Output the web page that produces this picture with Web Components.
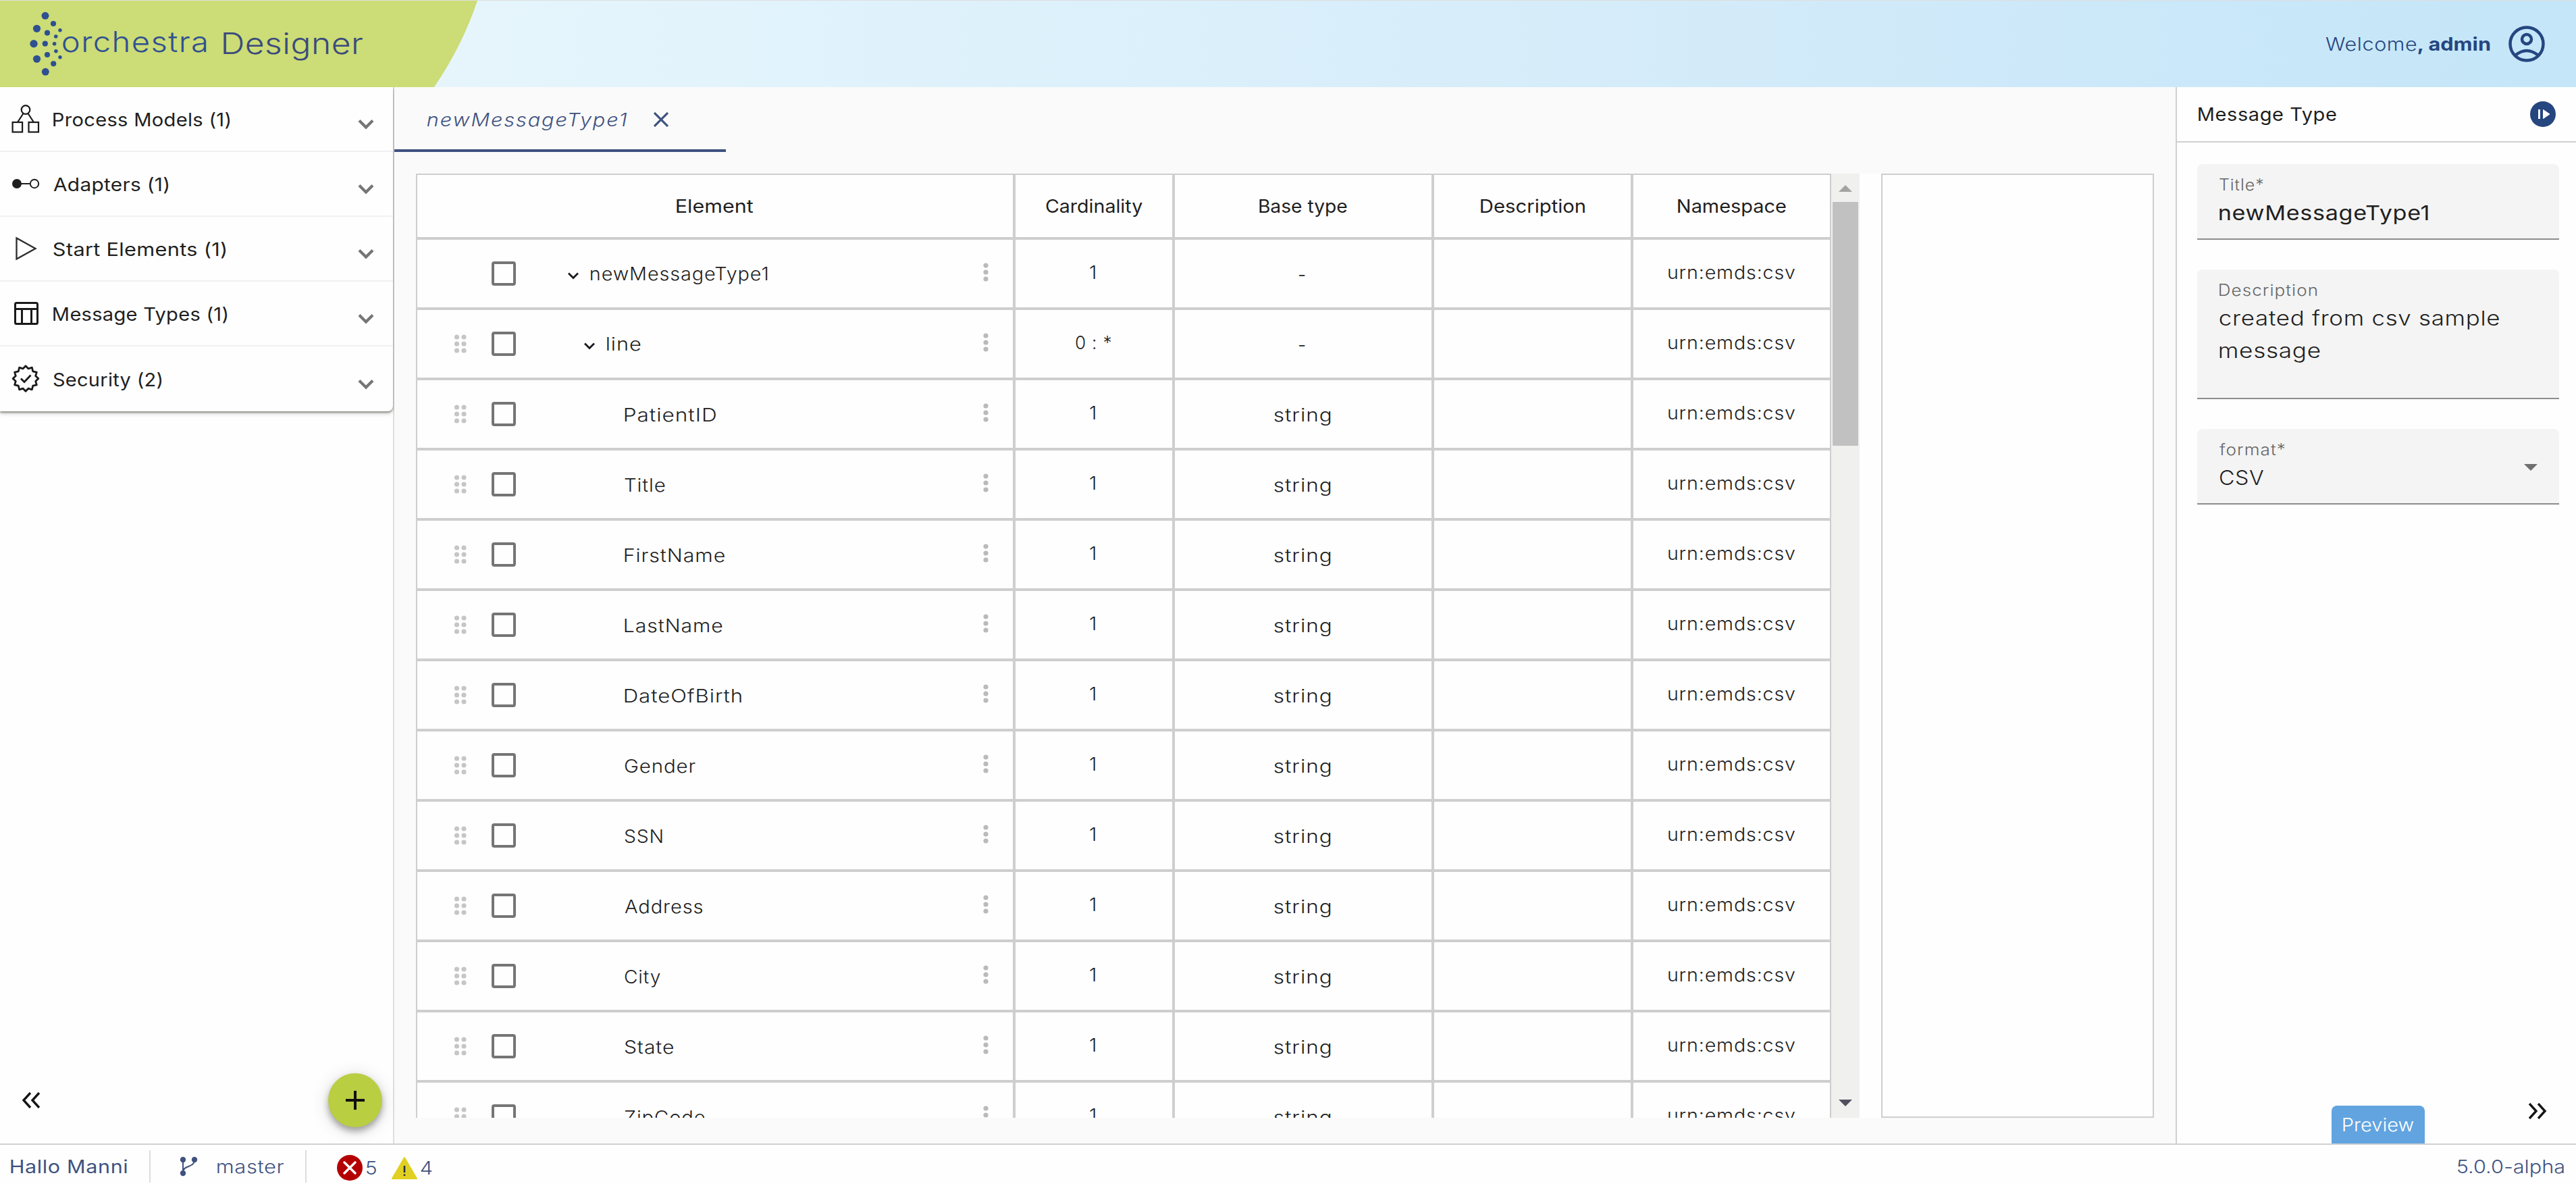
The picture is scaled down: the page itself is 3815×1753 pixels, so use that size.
<!DOCTYPE html>
<html lang="en">
<head>
<meta charset="utf-8">
<title>orchestra Designer</title>
<style>
  html, body { margin: 0; padding: 0; }
  body { width: 3815px; height: 1753px; overflow: hidden; font-family: Inter, "Open Sans", sans-serif; font-weight: 350; color: #1f1f1f; background: #fefefe; }
</style>
</head>
<body>
<designer-app></designer-app>
<script>
const define = (name, html, setup) => customElements.define(name, class extends HTMLElement {
  connectedCallback() {
    if (this.shadowRoot) return;
    const root = this.attachShadow({ mode: 'open' });
    root.innerHTML = typeof html === 'function' ? html(this) : html;
    if (setup) setup(this, root);
  }
});

/* A label whose box is exactly its cap height and its ink width (attribute w). */
const pen = document.createElement('canvas').getContext('2d');
define('fit-text', `<style>
  :host { display: block; flex: none; white-space: pre; line-height: .7275; font-size: 27px; letter-spacing: .02em; text-align: left; }
  span { display: inline-block; vertical-align: top; transform-origin: 0 0; }
</style><span><slot></slot></span>`, (host, root) => {
  const w = +host.getAttribute('w');
  if (host.hasAttribute('fs')) host.style.fontSize = host.getAttribute('fs') + 'px';
  host.style.width = w + 'px';
  host.style.height = '.7275em';
  const cs = getComputedStyle(host);
  pen.font = `${cs.fontStyle} ${cs.fontWeight} ${cs.fontSize} ${cs.fontFamily}`;
  pen.letterSpacing = cs.letterSpacing;
  const text = host.textContent;
  const m = pen.measureText(text);
  const last = text.length ? parseFloat(cs.letterSpacing) || 0 : 0;
  pen.letterSpacing = '0px';
  const plain = pen.measureText(text);
  const ink = plain.actualBoundingBoxLeft + plain.actualBoundingBoxRight + (m.width - plain.width) - last;
  const k = w / ink;
  root.querySelector('span').style.transform = `translate(${plain.actualBoundingBoxLeft * k}px, 1px) scaleX(${k})`;
});

const icons = {
  process: `<svg width="42" height="42" viewBox="0 0 42 42" fill="none" stroke="#1a1a1a" stroke-width="2.2"><circle cx="21" cy="7.5" r="6.3"/><path d="M17.5 13L9 26M24.500 13L33 26"/><rect x="1.600" y="26" width="14.500" height="14.500"/><rect x="25.500" y="26" width="14.500" height="14.500"/></svg>`,
  adapter: `<svg width="42" height="42" viewBox="0 0 42 42" fill="none" stroke="#1f1f1f" stroke-width="2"><circle cx="8" cy="21" r="7" fill="#1f1f1f" stroke="none"/><path d="M14 21H27"/><circle cx="34" cy="21" r="6.200"/></svg>`,
  start: `<svg width="42" height="42" viewBox="0 0 42 42" fill="none" stroke="#2b2b2b" stroke-width="2.300"><path d="M7.500 5.500V36.500L35.500 21Z"/></svg>`,
  message: `<svg width="42" height="42" viewBox="0 0 42 42" fill="none" stroke="#1a1a1a" stroke-width="3"><rect x="5.500" y="5.500" width="33" height="31" rx="2"/><path d="M5.500 14.500H38.500M15.500 14.500V36.500M29.500 14.500V36.500"/></svg>`,
  security: `<svg width="42" height="42" viewBox="0 0 42 42" fill="none" stroke="#1a1a1a" stroke-width="2.800"><path stroke-linejoin="round" d="${(() => {
    let d = '';
    for (let i = 0; i < 24; i++) {
      const a = (i + 1) * Math.PI / 12, r = i % 2 ? 18.800 : 15.200;
      d += (i ? 'L' : 'M') + (21 + r * Math.cos(a)).toFixed(1) + ' ' + (20.500 + r * Math.sin(a)).toFixed(1);
    }
    return d + 'Z';
  })()}"/><path d="M14 20.500L19 25.500L28.500 15.500"/></svg>`
};

define('brand-logo', `<style>
  :host { display: flex; align-items: flex-start; width: 710px; height: 128px; background: #ccdc76; clip-path: path('M0 0H707Q685 66 643 128H0Z'); font-weight: 300; }
  svg { flex: none; margin-right: -7.500px; }
  fit-text { margin-top: 44.800px; color: #2f5090; letter-spacing: .03em; }
  .d { margin: 46px 0 0 26px; color: #3a4b7c; letter-spacing: .01em; font-weight: 350; }
</style>
<svg width="100" height="128" viewBox="0 1 100 128" fill="#2f5090">
  <circle cx="67" cy="23.300" r="5.500"/><circle cx="54.500" cy="42.300" r="5.600"/><circle cx="50" cy="64.700" r="5.700"/><circle cx="54.500" cy="87.300" r="5.600"/><circle cx="67.300" cy="106.300" r="5.500"/>
  <circle cx="79" cy="35" r="4.100"/><circle cx="70" cy="48.700" r="4.100"/><circle cx="66.800" cy="64.700" r="4.100"/><circle cx="70" cy="81" r="4.100"/><circle cx="79.200" cy="94.300" r="4.100"/>
  <circle cx="89" cy="44.700" r="2.700"/><circle cx="82.700" cy="54" r="2.800"/><circle cx="80.600" cy="64.700" r="2.800"/><circle cx="82.900" cy="75.700" r="2.800"/><circle cx="89" cy="84.700" r="2.700"/>
</svg>
<fit-text w="212.500" fs="42">orchestra</fit-text><fit-text class="d" w="206" fs="44">Designer</fit-text>`);

define('app-header', `<style>
  :host { display: flex; align-items: center; justify-content: space-between; box-sizing: border-box; height: 129px; flex: none; border-top: 1px solid #dedede; background: linear-gradient(90deg, #e6f5fc 18%, #dbf0fb 45%, #d4ebf9 65%, #cae8f9 85%, #c4e6f8 100%); color: #25467f; }
  .user { display: flex; align-items: center; padding-right: 46px; }
  b { display: block; font-weight: 700; }
  svg { margin-left: 26px; }
</style>
<brand-logo></brand-logo>
<div class="user"><fit-text w="135">Welcome</fit-text><b><fit-text w="108" style="letter-spacing:0;margin-left:2px">, admin</fit-text></b>
<svg width="54" height="54" viewBox="0 0 54 54" fill="none" stroke="#25467f" stroke-width="4.500"><circle cx="27" cy="27" r="24.500"/><circle cx="27" cy="20" r="7"/><path d="M10 44Q27 30 44 44"/></svg></div>`);

define('nav-row', h => `<style>
  :host { display: flex; align-items: center; box-sizing: border-box; height: 96px; padding: 0 28px 0 17px; border-bottom: 2px solid #f1f1f1; font-weight: 430; }
  :host(:last-child) { border-bottom: 0; }
  .i { width: 42px; height: 42px; margin-right: 20px; }
  .c { margin: 15px 0 0 auto; }
  fit-text { padding-top: 1px; letter-spacing: .01em; }
</style><div class="i">${icons[h.getAttribute('icon')]}</div><fit-text w="${h.getAttribute('w')}">${h.getAttribute('label')}</fit-text>
<svg class="c" width="24" height="16" viewBox="0 0 24 16" fill="none" stroke="#757575" stroke-width="4.200"><path d="M2 2.500L12 12.500L22 2.500"/></svg>`);

define('side-bar', `<style>
  :host { display: flex; flex-direction: column; box-sizing: border-box; width: 584px; flex: none; border-right: 2px solid #dedede; background: #fefefe; }
  .list { border-radius: 0 0 8px 0; background: #fefefe; box-shadow: 0 2px 3px rgba(60,65,50,.55), 0 4px 6px rgba(0,0,0,.12); }
  .foot { display: flex; align-items: center; justify-content: space-between; margin-top: auto; padding: 0 16px 24px 32px; }
  .fab { display: flex; align-items: center; justify-content: center; width: 80px; height: 80px; border-radius: 50%; background: #b9ce41; box-shadow: 0 6px 10px rgba(0,0,0,.3), 0 4px 26px rgba(0,0,0,.16); }
</style>
<div class="list">
<nav-row icon="process" w="261" label="Process Models (1)"></nav-row>
<nav-row icon="adapter" w="170" label="Adapters (1)"></nav-row>
<nav-row icon="start" w="255" label="Start Elements (1)"></nav-row>
<nav-row icon="message" w="257" label="Message Types (1)"></nav-row>
<nav-row icon="security" w="160" label="Security (2)"></nav-row>
</div>
<div class="foot">
<svg width="28" height="24" viewBox="0 0 28 24" fill="none" stroke="#141414" stroke-width="3.400"><path d="M13 1L3 12L13 23M26 1L16 12L26 23"/></svg>
<div class="fab"><svg width="28" height="28" viewBox="0 0 28 28" stroke="#111" stroke-width="4"><path d="M0 14H28M14 0V28"/></svg></div>
</div>`);

define('check-box', `<style>:host { display: block; flex: none; box-sizing: border-box; width: 36px; height: 36px; border: 4px solid #757575; border-radius: 4px; }</style>`);

define('tree-row', h => {
  const [name, w, depth, card, cw, type, tw] = h.getAttribute('data').split('|');
  const indent = [77, 101, 160.500][depth];
  const dots = (xs, fill, cls) => `<svg class="${cls}" width="24" height="30" viewBox="0 0 24 30" fill="${fill}">${xs.map(x => [5, 15, 25].map(y => `<circle cx="${x}" cy="${y}" r="3.600"/>`).join('')).join('')}</svg>`;
  return `<style>
  :host { display: grid; grid-template-columns: var(--cols); height: 100px; border-bottom: 4px solid #cecece; flex: none; }
  div { display: flex; align-items: center; justify-content: center; border-right: 4px solid #cecece; }
  div:last-child { border-right-width: 2px; }
  .name { justify-content: flex-start; padding: 0 28px 0 53px; }
  .drag { margin-right: 33px; }
  .menu { margin: -4px 0 0 auto; }
  .hide { visibility: hidden; }
  .up { padding-bottom: 5px; } .down { padding-top: 2px; }
  .mid { padding-right: 3px; }
  .chev { margin-right: 18px; margin-top: 6px; }
  fit-text { letter-spacing: .03em; }
</style>
<div class="name">${dots([5.500, 16], '#c6c6c6', depth === '0' ? 'drag hide' : 'drag')}<check-box></check-box><span style="width:${indent}px;flex:none"></span>
${depth < 2 ? '<svg class="chev" width="16" height="11" viewBox="0 0 16 11" fill="none" stroke="#1a1a1a" stroke-width="2.800"><path d="M1 1.500L8 8.500L15 1.500"/></svg>' : ''}<fit-text w="${w}" style="${depth === '2' ? 'margin-top:2px' : ''}">${name}</fit-text>${dots([12], '#bababa', 'menu')}</div>
<div class="up mid"><fit-text w="${cw}">${card}</fit-text></div>
<div class="down mid"><fit-text w="${tw}">${type}</fit-text></div>
<div></div>
<div class="up"><fit-text w="188">urn:emds:csv</fit-text></div>`;
});

define('element-table', () => {
  const kids = [['PatientID', 135], ['Title', 60], ['FirstName', 148.500], ['LastName', 145], ['DateOfBirth', 173], ['Gender', 105.500], ['SSN', 55.500], ['Address', 115.600], ['City', 53.300], ['State', 72.700], ['ZipCode', 119]];
  const rows = ['newMessageType1|262|0|1|8.500|-|9', 'line|50|1|0 : *|52|-|9', ...kids.map(([n, w]) => `${n}|${w}|2|1|8.500|string|83`)];
  return `<style>
  :host { display: flex; flex-direction: column; width: 2094px; height: 1398px; overflow: hidden; border-left: 2px solid #cecece; flex: none; --cols: 886px 236px 384px 295px 293px; }
  .head { display: grid; grid-template-columns: var(--cols); height: 92px; flex: none; border-top: 2px solid #cecece; border-bottom: 4px solid #cecece; font-weight: 430; }
  .head div { display: flex; align-items: center; justify-content: center; border-right: 4px solid #cecece; }
  .head div:last-child { border-right-width: 2px; }
  .head fit-text { margin-top: -1px; letter-spacing: 0; }
</style>
<div class="head"><div><fit-text w="114">Element</fit-text></div><div><fit-text w="143">Cardinality</fit-text></div><div><fit-text w="130">Base type</fit-text></div><div><fit-text w="154">Description</fit-text></div><div><fit-text w="160">Namespace</fit-text></div></div>
${rows.map(r => `<tree-row data="${r}"></tree-row>`).join('')}`;
});

define('scroll-track', `<style>
  :host { display: flex; flex-direction: column; align-items: center; width: 42px; flex: none; background: #f0f0ef; }
  .thumb { width: 38px; height: 361px; margin-top: 15px; background: #c1c1c1; }
  .a { margin-top: 17px; } .z { margin: auto 0 17px; }
  svg { display: block; flex: none; }
</style>
<svg class="a" width="20" height="10" fill="#a3a3a3"><path d="M0 10L10 0L20 10Z"/></svg>
<div class="thumb"></div>
<svg class="z" width="20" height="10" fill="#505060"><path d="M0 0L10 10L20 0Z"/></svg>`);

define('work-space', `<style>
  :host { display: flex; flex-direction: column; flex: 1; background: #fafafa; }
  .tab { display: flex; align-items: center; box-sizing: border-box; width: 491px; height: 96px; padding: 4px 0 0 49px; border-bottom: 4px solid #3f5280; color: #3f5280; font-style: italic; }
  .tab svg { margin-left: 39px; }
  .tab fit-text { letter-spacing: .06em; }
  .body { display: flex; margin: 32px 32px 38px; background: #fefefe; height: 1398px; }
  .panel { flex: 1; margin-left: 32px; border: 2px solid #cecece; }
</style>
<div class="tab"><fit-text w="296">newMessageType1</fit-text><svg width="22" height="22" viewBox="0 0 22 22" stroke="#3f5280" stroke-width="3.200"><path d="M1 1L21 21M21 1L1 21"/></svg></div>
<div class="body"><element-table></element-table><scroll-track></scroll-track><div class="panel"></div></div>`);

define('form-field', h => `<style>
  :host { display: flex; box-sizing: border-box; height: 112px; margin-bottom: 44px; padding: 21px 32px 0 33px; background: #f4f4f4; border-bottom: 2px solid #8c8c8c; border-radius: 8px 8px 0 0; justify-content: space-between; }
  .label { color: #666; margin-bottom: 22.500px; letter-spacing: .04em; }
  ::slotted(fit-text) { margin-bottom: 26.500px; }
  svg { margin-top: 31px; }
</style><div><fit-text class="label" fs="23.500" w="${h.getAttribute('w')}">${h.getAttribute('label')}</fit-text><slot></slot></div>
${h.hasAttribute('select') ? '<svg width="20" height="10" fill="#6f6f6f"><path d="M0 0H20L10 10Z"/></svg>' : ''}`);

define('property-panel', `<style>
  :host { display: flex; flex-direction: column; box-sizing: border-box; width: 593px; flex: none; border-left: 2px solid #d0d0d0; background: #fefefe; }
  .head { display: flex; align-items: center; justify-content: space-between; height: 80px; padding: 0 30px 0 32px; border-bottom: 2px solid #d0d0d0; font-weight: 430; }
  .form { padding: 32px 25px 0 30px; }
  .foot { display: flex; align-items: flex-end; margin-top: auto; padding: 0 43px 0 229px; justify-content: space-between; }
  .preview { display: flex; align-items: center; justify-content: center; width: 138px; height: 56px; border-radius: 8px 8px 0 0; background: #61a4e0; color: #fff; }
  .foot svg { margin-bottom: 36px; }
</style>
<div class="head"><fit-text w="204">Message Type</fit-text><svg width="38" height="38" viewBox="0 0 38 38"><circle cx="19" cy="19" r="19" fill="#25467f"/><path d="M13.500 12V26" stroke="#fff" stroke-width="3"/><path d="M19.500 12.500V25.500L29 19Z" fill="#fff" stroke="#fff" stroke-linejoin="round"/></svg></div>
<div class="form">
<form-field label="Title*" w="65"><fit-text fs="30" w="309" style="font-weight:430">newMessageType1</fit-text></form-field>
<form-field label="Description" w="144" style="height:192px"><fit-text fs="30" w="414">created from csv sample</fit-text><fit-text fs="30" w="148.500">message</fit-text></form-field>
<form-field label="format*" w="97" select><fit-text fs="30" w="65.500">CSV</fit-text></form-field>
</div>
<div class="foot"><div class="preview"><fit-text w="104" style="letter-spacing:0">Preview</fit-text></div>
<svg width="28" height="24" viewBox="0 0 28 24" fill="none" stroke="#141414" stroke-width="3.400"><path d="M2 1L12 12L2 23M15 1L25 12L15 23"/></svg></div>`);

define('status-bar', `<style>
  :host { display: flex; align-items: center; box-sizing: border-box; height: 60px; flex: none; padding: 6px 18px 0 16px; border-top: 2px solid #d0d0d0; background: #fefefe; color: #3f5280; }
  i { width: 2px; height: 48px; background: #dcdcdc; }
  .g { margin: 0 29px 0 43px; }
  .e { margin: 4px 6px 0 45px; }
  .w { margin: 4px 5px 0 22px; }
  .n { margin-top: 4px; }
  .v { margin-left: auto; letter-spacing: 0; }
</style>
<fit-text w="172" style="font-weight:430;margin-right:32.500px">Hallo Manni</fit-text><i></i>
<svg class="g" width="27" height="30" viewBox="0 0 27 30" fill="none" stroke="#3f5280" stroke-width="2"><path d="M5 5V25M22 5C22 18 5 12 5 24"/><g fill="#3f5280" stroke="none"><circle cx="5" cy="5" r="4.200"/><circle cx="22" cy="5" r="4.200"/><circle cx="5" cy="25" r="4.200"/></g></svg>
<fit-text w="99" style="margin-right:31.500px">master</fit-text><i></i>
<svg class="e" width="38" height="38" viewBox="0 0 38 38"><circle cx="19" cy="19" r="19" fill="#b40000"/><path d="M11 11L27 27M27 11L11 27" stroke="#fff" stroke-width="3.400" stroke-linecap="round"/></svg><fit-text class="n" w="14.500">5</fit-text>
<svg class="w" width="38" height="33" viewBox="0 0 38 33"><path d="M19 1L37 32H1Z" fill="#e1d021" stroke="#e1d021" stroke-width="2" stroke-linejoin="round"/><path d="M19 13V23M19 25.500V28" stroke="#25304a" stroke-width="2.600"/></svg><fit-text class="n" w="17">4</fit-text>
<fit-text class="v" w="157">5.0.0-alpha</fit-text>`);

define('designer-app', `<style>
  :host { display: flex; flex-direction: column; width: 3815px; height: 1753px; overflow: hidden; }
  main { display: flex; flex: 1; min-height: 0; }
</style><app-header></app-header><main><side-bar></side-bar><work-space></work-space><property-panel></property-panel></main><status-bar></status-bar>`);
</script>
</body>
</html>
